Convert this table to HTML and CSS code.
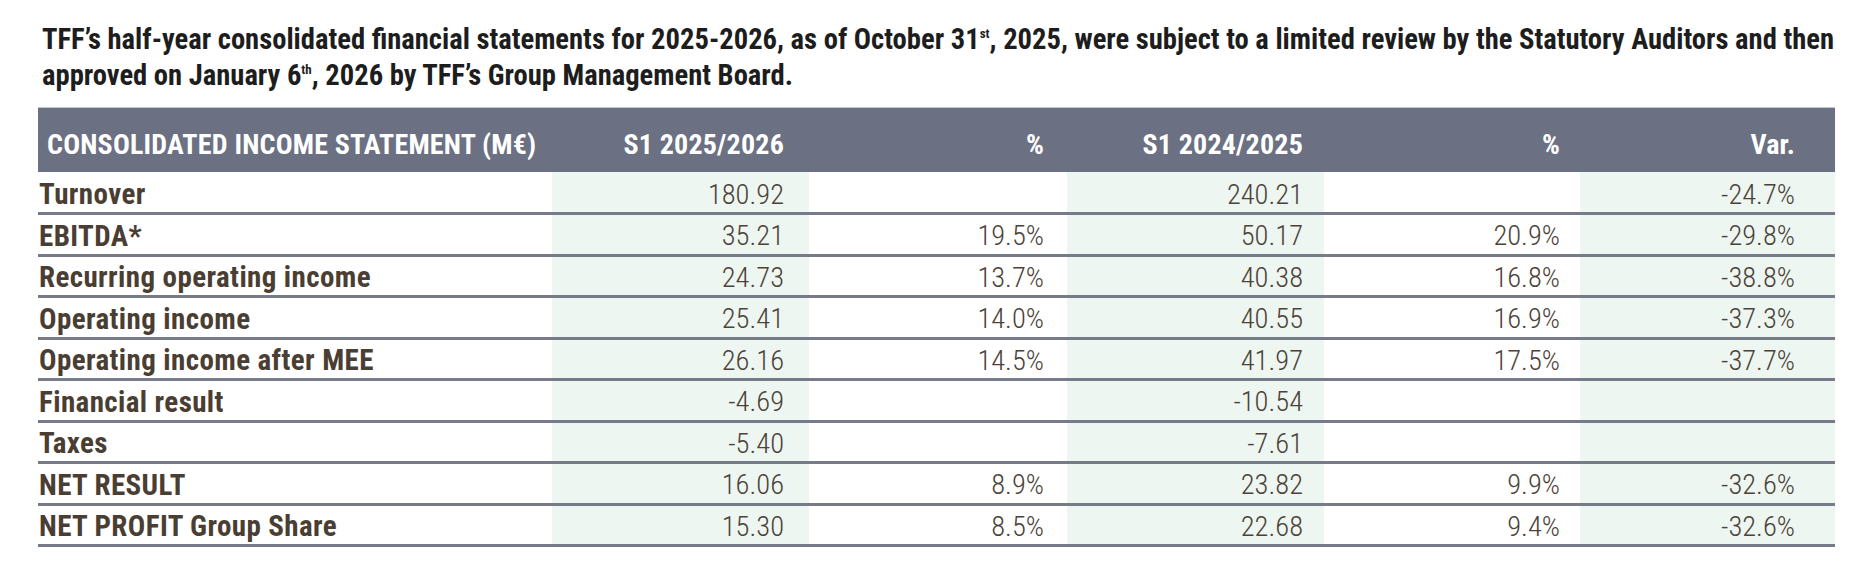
FILE: index.html
```html
<!DOCTYPE html>
<html lang="en">
<head>
<meta charset="utf-8">
<title>TFF half-year consolidated income statement</title>
<link rel="stylesheet" href="styles.css">
</head>
<body>
<main class="page">
  <p class="intro">TFF’s half-year consolidated financial statements for 2025-2026, as of October 31<sup>st</sup>, 2025, were subject to a limited review by the Statutory Auditors and then<br>approved on January 6<sup>th</sup>, 2026 by TFF’s Group Management Board.</p>
  <table class="fin">
    <colgroup>
      <col class="w-label">
      <col class="w-c2">
      <col class="w-c3">
      <col class="w-c4">
      <col class="w-c5">
      <col class="w-c6">
    </colgroup>
    <thead>
      <tr>
        <th class="label">CONSOLIDATED INCOME STATEMENT (M€)</th>
        <th class="c2">S1 2025/2026</th>
        <th class="c3">%</th>
        <th class="c4">S1 2024/2025</th>
        <th class="c5">%</th>
        <th class="c6">Var.</th>
      </tr>
    </thead>
    <tbody>
      <tr><td class="label">Turnover</td><td class="c2 tint">180.92</td><td class="c3"></td><td class="c4 tint">240.21</td><td class="c5"></td><td class="c6 tint">-24.7%</td></tr>
      <tr><td class="label">EBITDA*</td><td class="c2 tint">35.21</td><td class="c3">19.5%</td><td class="c4 tint">50.17</td><td class="c5">20.9%</td><td class="c6 tint">-29.8%</td></tr>
      <tr><td class="label">Recurring operating income</td><td class="c2 tint">24.73</td><td class="c3">13.7%</td><td class="c4 tint">40.38</td><td class="c5">16.8%</td><td class="c6 tint">-38.8%</td></tr>
      <tr><td class="label">Operating income</td><td class="c2 tint">25.41</td><td class="c3">14.0%</td><td class="c4 tint">40.55</td><td class="c5">16.9%</td><td class="c6 tint">-37.3%</td></tr>
      <tr><td class="label">Operating income after MEE</td><td class="c2 tint">26.16</td><td class="c3">14.5%</td><td class="c4 tint">41.97</td><td class="c5">17.5%</td><td class="c6 tint">-37.7%</td></tr>
      <tr><td class="label">Financial result</td><td class="c2 tint">-4.69</td><td class="c3"></td><td class="c4 tint">-10.54</td><td class="c5"></td><td class="c6 tint"></td></tr>
      <tr><td class="label">Taxes</td><td class="c2 tint">-5.40</td><td class="c3"></td><td class="c4 tint">-7.61</td><td class="c5"></td><td class="c6 tint"></td></tr>
      <tr><td class="label">NET RESULT</td><td class="c2 tint">16.06</td><td class="c3">8.9%</td><td class="c4 tint">23.82</td><td class="c5">9.9%</td><td class="c6 tint">-32.6%</td></tr>
      <tr><td class="label">NET PROFIT Group Share</td><td class="c2 tint">15.30</td><td class="c3">8.5%</td><td class="c4 tint">22.68</td><td class="c5">9.4%</td><td class="c6 tint">-32.6%</td></tr>
    </tbody>
  </table>
</main>
</body>
</html>
```
FILE: styles.css
```css
html, body {
  margin: 0;
  padding: 0;
  background: #ffffff;
}

.page {
  padding: 21px 0 0 38px;
  font-family: Roboto, "Open Sans", "Liberation Sans", sans-serif;
  font-stretch: 75%;
}

.intro {
  margin: 0 0 14px 4px;
  font-size: 28.6px;
  line-height: 36px;
  font-weight: 700;
  color: #1d1d1d;
  white-space: nowrap;
}

.intro sup {
  font-size: 13px;
  line-height: 0;
  vertical-align: 11px;
  font-weight: 700;
}

.fin {
  border-collapse: collapse;
  table-layout: fixed;
  width: 1797px;
}

.w-label { width: 514px; }
.w-c2 { width: 257px; }
.w-c3 { width: 258px; }
.w-c4 { width: 257px; }
.w-c5 { width: 256px; }
.w-c6 { width: 255px; }

.fin th {
  height: 55px;
  padding: 9px 0 0 0;
  background: #6b7082;
  border-top: 1px solid #c3c6cd;
  color: #ffffff;
  font-size: 28px;
  letter-spacing: 0.2px;
  font-weight: 700;
  text-align: right;
  vertical-align: middle;
  white-space: nowrap;
}

.fin th.label {
  text-align: left;
  padding-left: 9px;
}

.fin td {
  height: 35.5px;
  padding: 3px 0 0 0;
  border-bottom: 3px solid #777b89;
  color: #4c4238;
  font-size: 28.5px;
  font-weight: 300;
  text-align: right;
  vertical-align: middle;
  white-space: nowrap;
}

.fin tbody tr:first-child td {
  padding-top: 4.5px;
}

.fin td.label {
  text-align: left;
  padding-left: 1px;
  font-size: 29px;
  letter-spacing: 0.4px;
  font-weight: 700;
  color: #4a3e33;
}

.fin .tint { background: #edf6f0; }

.fin .c2 { padding-right: 25px; }
.fin .c3 { padding-right: 23px; }
.fin .c4 { padding-right: 21px; }
.fin .c5 { padding-right: 20px; }
.fin .c6 { padding-right: 40px; }
```
